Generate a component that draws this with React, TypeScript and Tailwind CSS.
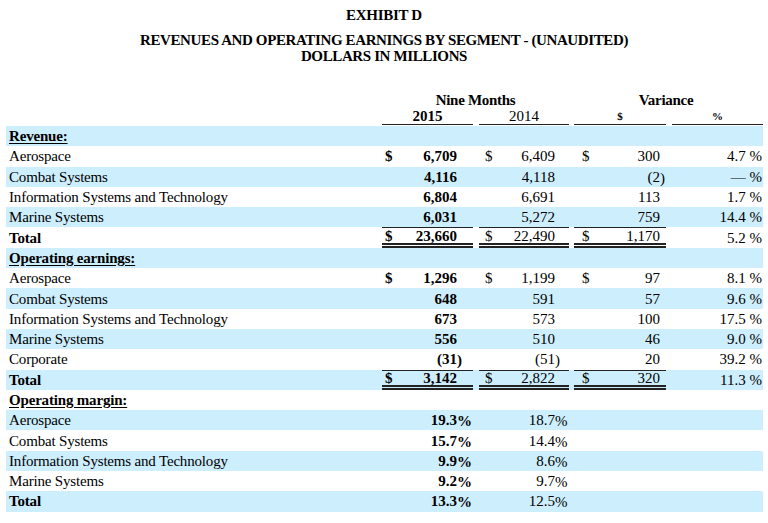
import React from "react";

type Cell = { d?: boolean; v?: string; s?: string };
type Row = {
  label: string;
  kind?: "section" | "total";
  cells?: (Cell | null)[];
  lines?: boolean;
};

const rows: Row[] = [
  { label: "Revenue:", kind: "section" },
  { label: "Aerospace", cells: [{ d: true, v: "6,709" }, { d: true, v: "6,409" }, { d: true, v: "300" }, { v: "4.7 %" }] },
  { label: "Combat Systems", cells: [{ v: "4,116" }, { v: "4,118" }, { v: "(2", s: ")" }, { v: "— %" }] },
  { label: "Information Systems and Technology", cells: [{ v: "6,804" }, { v: "6,691" }, { v: "113" }, { v: "1.7 %" }] },
  { label: "Marine Systems", cells: [{ v: "6,031" }, { v: "5,272" }, { v: "759" }, { v: "14.4 %" }] },
  { label: "Total", kind: "total", lines: true, cells: [{ d: true, v: "23,660" }, { d: true, v: "22,490" }, { d: true, v: "1,170" }, { v: "5.2 %" }] },
  { label: "Operating earnings:", kind: "section" },
  { label: "Aerospace", cells: [{ d: true, v: "1,296" }, { d: true, v: "1,199" }, { d: true, v: "97" }, { v: "8.1 %" }] },
  { label: "Combat Systems", cells: [{ v: "648" }, { v: "591" }, { v: "57" }, { v: "9.6 %" }] },
  { label: "Information Systems and Technology", cells: [{ v: "673" }, { v: "573" }, { v: "100" }, { v: "17.5 %" }] },
  { label: "Marine Systems", cells: [{ v: "556" }, { v: "510" }, { v: "46" }, { v: "9.0 %" }] },
  { label: "Corporate", cells: [{ v: "(31", s: ")" }, { v: "(51", s: ")" }, { v: "20" }, { v: "39.2 %" }] },
  { label: "Total", kind: "total", lines: true, cells: [{ d: true, v: "3,142" }, { d: true, v: "2,822" }, { d: true, v: "320" }, { v: "11.3 %" }] },
  { label: "Operating margin:", kind: "section" },
  { label: "Aerospace", cells: [{ v: "19.3", s: "%" }, { v: "18.7", s: "%" }, null, null] },
  { label: "Combat Systems", cells: [{ v: "15.7", s: "%" }, { v: "14.4", s: "%" }, null, null] },
  { label: "Information Systems and Technology", cells: [{ v: "9.9", s: "%" }, { v: "8.6", s: "%" }, null, null] },
  { label: "Marine Systems", cells: [{ v: "9.2", s: "%" }, { v: "9.7", s: "%" }, null, null] },
  { label: "Total", kind: "total", cells: [{ v: "13.3", s: "%" }, { v: "12.5", s: "%" }, null, null] },
];

const widths = ["w-[91px]", "w-[90px] ml-[6px]", "w-[92px] ml-[5px]", "w-[91px] ml-[6px]"];
const pr = ["pr-[16px]", "pr-[14px]", "pr-[6px]", "pr-[1px]"];
const dl = ["left-[3px]", "left-[6px]", "left-[8px]", "left-[4px]"];

function DataCell({ c, idx, lines }: { c: Cell | null; idx: number; lines?: boolean }) {
  const bold = idx === 0;
  const showLines = lines && idx < 3;
  return (
    <div
      className={`${widths[idx]} h-full relative flex items-center ${
        showLines ? "border-t-[1.5px] border-b-[5px] border-[#222]" : ""
      }`}
      style={showLines ? { borderTopStyle: "solid", borderBottomStyle: "double" } : undefined}
    >
      {c && c.d && <span className={`absolute ${dl[idx]} ${bold ? "font-bold" : ""}`}>$</span>}
      {c && (
        <span className={`ml-auto ${pr[idx]} ${bold ? "font-bold" : ""}`}>
          <span className="relative whitespace-pre">
            {c.v}
            {c.s && <span className="absolute left-full top-0 whitespace-pre">{c.s}</span>}
          </span>
        </span>
      )}
    </div>
  );
}

export default function App() {
  return (
    <div
      className="w-[768px] h-[523px] bg-white text-black overflow-hidden"
      style={{ fontFamily: '"Liberation Serif", "Times New Roman", serif' }}
    >
      <div className="pt-[6px] text-center font-bold text-[15px] leading-[18px] tracking-[-0.3px]">EXHIBIT D</div>
      <div className="mt-[8px] text-center font-bold text-[15px] leading-[16px] tracking-[-0.38px]">
        REVENUES AND OPERATING EARNINGS BY SEGMENT - (UNAUDITED)
      </div>
      <div className="text-center font-bold text-[15px] leading-[16px] tracking-[-0.38px]">DOLLARS IN MILLIONS</div>

      <div className="ml-[6px] mt-[28px] w-[757px] text-[15px]">
        <div className="flex h-[16px] leading-[16px] font-bold tracking-[-0.3px]">
          <div className="w-[376px]" />
          <div className="w-[187px] text-center">Nine Months</div>
          <div className="w-[194px] text-center">Variance</div>
        </div>
        <div className="flex h-[17px] leading-[16px] mb-[1px]">
          <div className="w-[376px]" />
          <div className="w-[91px] text-center font-bold border-b-[1.5px] border-[#222]">2015</div>
          <div className="w-[90px] ml-[6px] text-center border-b-[1.5px] border-[#222]">2014</div>
          <div className="w-[92px] ml-[5px] text-center font-bold text-[11px] border-b-[1.5px] border-[#222]">$</div>
          <div className="w-[91px] ml-[6px] text-center font-bold text-[11px] border-b-[1.5px] border-[#222]">%</div>
        </div>
        {rows.map((r, i) => (
          <div
            key={i}
            className={`flex h-[20.3px] leading-[18px] ${i % 2 === 0 ? "bg-[#cdeefc]" : "bg-white"}`}
          >
            <div
              className={`w-[376px] flex items-center pl-[3px] tracking-[-0.18px] ${
                r.kind === "section" ? "font-bold underline underline-offset-[2px]" : r.kind === "total" ? "font-bold" : ""
              }`}
            >
              {r.label}
            </div>
            {r.cells && r.cells.map((c, j) => <DataCell key={j} c={c} idx={j} lines={r.lines} />)}
          </div>
        ))}
      </div>
    </div>
  );
}
